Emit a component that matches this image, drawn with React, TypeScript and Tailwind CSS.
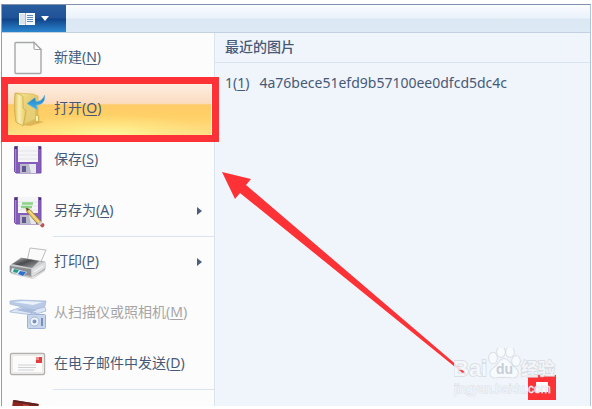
import type { ReactNode } from 'react';
import clsx from 'clsx';

function NewIcon() {
  return (
    <svg viewBox="0 0 38 36" className="h-9 w-[38px]" aria-hidden="true">
      <path d="M7 2.5h18l7 7v23a1 1 0 0 1-1 1H7a1 1 0 0 1-1-1v-29a1 1 0 0 1 1-1z" fill="#fafafa" stroke="#a5a7a8" strokeWidth="1.4" />
      <path d="M25 2.5v5.500a1.500 1.500 0 0 0 1.500 1.500H32z" fill="#fff" stroke="#a5a7a8" strokeWidth="1.200" />
    </svg>
  );
}

function OpenIcon() {
  return (
    <svg viewBox="0 0 38 36" className="h-9 w-[38px]" aria-hidden="true">
      <defs>
        <linearGradient id="flap" x1="0" y1="0" x2="1" y2="0">
          <stop offset="0" stopColor="#dfbf58" />
          <stop offset=".4" stopColor="#faeeb0" />
          <stop offset="1" stopColor="#e6c862" />
        </linearGradient>
        <linearGradient id="back" x1="0" y1="0" x2="1" y2="1">
          <stop offset="0" stopColor="#f6e591" />
          <stop offset="1" stopColor="#d8b04a" />
        </linearGradient>
        <linearGradient id="arrowBlue" x1="0" y1="0" x2="0" y2="1">
          <stop offset="0" stopColor="#2476b6" />
          <stop offset="1" stopColor="#3db7f3" />
        </linearGradient>
      </defs>
      <path d="M13 34l18-4 4 1-14 4z" fill="#a87725" opacity=".35" />
      <path d="M7 2l17 1 5 2v19l1 1v6l-17 3z" fill="url(#back)" stroke="#d4b14e" strokeWidth=".6" />
      <path d="M6 2c4 1 7 2 8 4v11l3 3-3 15-7-4C5 21 5 10 6 2z" fill="url(#flap)" stroke="#c9a646" strokeWidth=".7" />
      <path d="M18 14l8 4v10l-10 4 2-12z" fill="#e8d078" opacity=".9" />
      <path d="M27 25h2v5h-2z" fill="#fff3b0" />
      <path d="M35.500 4c1 6-2 10-8 10l1 5-10.500-6.500L26 6.500l1 4c4 0 7-2 8.500-6.500z" fill="url(#arrowBlue)" stroke="#71bde5" strokeWidth=".5" />
    </svg>
  );
}

function Floppy() {
  return (
    <>
      <path d="M5.500 4.500H32v26.500H7L5.500 29.500z" fill="#855cba" stroke="#7450a6" strokeWidth="1" />
      <path d="M6.500 7v23" stroke="#a786d2" strokeWidth="1" />
      <path d="M9 4h20v16H9z" fill="#f5f5f8" />
      <path d="M9 9h20M9 13h20M9 17h20" stroke="#dedfe6" strokeWidth=".8" />
      <path d="M11 22h16v9H11z" fill="#b9bbc8" />
      <path d="M20 22h7v9h-5z" fill="#e7e8ef" />
      <path d="M13 24h4v6h-4z" fill="#635590" />
      <path d="M6 5h2v2H6zM30 5h2v2h-2z" fill="#45336b" />
    </>
  );
}

function SaveIcon() {
  return (
    <svg viewBox="0 0 38 36" className="h-9 w-[38px]" aria-hidden="true">
      <Floppy />
    </svg>
  );
}

function SaveAsIcon() {
  return (
    <svg viewBox="0 0 38 36" className="h-9 w-[38px]" aria-hidden="true">
      <Floppy />
      <path d="M13 10.500h11M12 14h11" stroke="#8bd384" strokeWidth="2.500" />
      <path d="M17 15l4 1.500 11 12-3 3L18 19z" fill="#e8c65e" stroke="#927034" strokeWidth=".8" />
      <path d="M17 15l3 1-1.500 2z" fill="#4a4335" />
      <path d="M20 18l10 11" stroke="#fbeaa4" strokeWidth="1" />
      <path d="M29 30.500l3-2.500 3 3-3 3z" fill="#cfd6d5" />
      <path d="M31 32.500l3-2.500c2 1 2 4-1 4.500z" fill="#c84d51" />
    </svg>
  );
}

function PrintIcon() {
  return (
    <svg viewBox="0 0 38 36" className="h-9 w-[38px]" aria-hidden="true">
      <defs>
        <linearGradient id="printer" x1="0" y1="0" x2="1" y2="1">
          <stop offset="0" stopColor="#bbb" />
          <stop offset=".45" stopColor="#4a4c4e" />
          <stop offset="1" stopColor="#aaa" />
        </linearGradient>
      </defs>
      <path d="M2 28l22 6 12-10v3L24 35 2 30z" fill="#777" opacity=".3" />
      <path d="M21 4l16 2-6 14-13-3z" fill="#fafafa" stroke="#b3b5b7" strokeWidth=".9" />
      <path d="M1 22l11-8 24 4v7L23 33 1 28z" fill="#c7c9cb" stroke="#909294" strokeWidth=".7" />
      <path d="M3 20l10-6 17 3-7 7z" fill="url(#printer)" />
      <path d="M1 22l21 3v7L1 28z" fill="#8b8e91" />
      <path d="M23 25l13-7v6L23 33z" fill="#dcddde" />
      <path d="M3 24l15 4-4 4-12-4z" fill="#e1edf4" />
      <path d="M5 25l5 1-2 3-4-1z" fill="#269d83" />
      <path d="M11 27l6 1-3 4-5-2z" fill="#2e6fce" />
      <path d="M25 28l9-6" stroke="#f5f5f5" strokeWidth="1.200" />
    </svg>
  );
}

function ScannerIcon() {
  return (
    <svg viewBox="0 0 38 36" className="h-9 w-[38px]" aria-hidden="true">
      <path d="M1 6l10-1 26 1-1 5-11 4L1 9z" fill="#b9cae6" stroke="#a5b7d8" strokeWidth=".7" />
      <path d="M4 7l20 3 10-3-20-1z" fill="#e9f1fc" />
      <path d="M1 16l12-4 11 3 12-3 1 4-13 4L1 17z" fill="#dce6f6" stroke="#a5b7d8" strokeWidth=".8" />
      <path d="M7 15l7-2 14 2-7 3z" fill="#a9bbdb" />
      <rect x="18.500" y="19.500" width="18" height="14" rx="1" fill="#c8d6ed" stroke="#9fb2d5" />
      <path d="M22 19.500v-2h5v2" fill="#b4c6e3" stroke="#9fb2d5" strokeWidth=".7" />
      <circle cx="25.500" cy="26.500" r="4.500" fill="#eef4fd" stroke="#a3b5d6" />
      <circle cx="25.500" cy="26.500" r="2" fill="#7e94bf" />
      <path d="M33 23v8" stroke="#778fbc" strokeWidth="2" />
    </svg>
  );
}

function MailIcon() {
  return (
    <svg viewBox="0 0 38 36" className="h-9 w-[38px]" aria-hidden="true">
      <rect x="1.500" y="7.500" width="34" height="21" rx="1.500" fill="#fbfbfb" stroke="#b2b0ae" strokeWidth="1.400" />
      <rect x="3.500" y="9.500" width="30" height="17" fill="none" stroke="#ece9e7" />
      <path d="M27 11h6v6h-6z" fill="#e43d3f" />
      <path d="M27 11h3v3h-3z" fill="#f08683" />
      <path d="M9 19h18M9 21.500h18M9 24h16" stroke="#cfd0d2" strokeWidth="1" />
    </svg>
  );
}

type Item = {
  label: string;
  accessKey: string;
  icon: ReactNode;
  submenu?: boolean;
  disabled?: boolean;
  active?: boolean;
  divider?: boolean;
};

const items: Item[] = [
  { label: '新建', accessKey: 'N', icon: <NewIcon /> },
  { label: '打开', accessKey: 'O', icon: <OpenIcon />, active: true },
  { label: '保存', accessKey: 'S', icon: <SaveIcon /> },
  { label: '另存为', accessKey: 'A', icon: <SaveAsIcon />, submenu: true, divider: true },
  { label: '打印', accessKey: 'P', icon: <PrintIcon />, submenu: true },
  { label: '从扫描仪或照相机', accessKey: 'M', icon: <ScannerIcon />, disabled: true },
  { label: '在电子邮件中发送', accessKey: 'D', icon: <MailIcon />, divider: true },
];

function MenuItem({ label, accessKey, icon, submenu, disabled, active, divider }: Item) {
  return (
    <li className="relative">
      {active && (
        <span className="absolute inset-y-0 left-1.5 right-[3px] bg-[radial-gradient(50%_40%_at_50%_100%,#fff79e_0%,#fff08c80_50%,transparent_100%),linear-gradient(#fdeee2_0%,#fbdcbf_38%,#ffcb66_41%,#ffd168_65%,#ffe08a_100%)]" />
      )}
      <button
        type="button"
        disabled={disabled}
        className={clsx(
          'relative flex h-[51px] w-full items-center gap-[7px] pb-0.5 pl-[7px] text-left',
          disabled ? 'text-[#a5a5a5]' : 'text-[#465a78]',
        )}
      >
        {icon}
        <span className="flex-1 whitespace-nowrap pb-0.5">
          {label}(<u className="underline-offset-2">{accessKey}</u>)
        </span>
        {submenu && (
          <svg viewBox="0 0 5 8" className="mr-3 h-2 w-[5px]" aria-hidden="true">
            <path d="M0 0l5 4-5 4z" fill="#4c607d" />
          </svg>
        )}
      </button>
      {divider && <span className="absolute bottom-0 left-[51px] right-0 h-px bg-[#dae4f0]" />}
      {active && (
        <span className="pointer-events-none absolute -inset-y-[7px] -left-px -right-[5px] z-10 border-[7px] border-[#fd3236]" />
      )}
    </li>
  );
}

function Watermark() {
  return (
    <svg viewBox="0 0 108 58" className="absolute bottom-0 right-7 h-[58px] w-[108px]" aria-hidden="true">
      <path d="M74 27h28v25H74z" fill="#fd3236" />
      <path d="M82 34h12v10H82z" fill="#fff" />
      <g fill="#fafcfe" fillOpacity=".8" stroke="#cfd5dc" strokeOpacity=".8" strokeWidth="1.500" paintOrder="stroke">
        <text x="-1" y="28" fontFamily="Liberation Sans, sans-serif" fontWeight="bold" fontSize="22">Bai</text>
        <ellipse cx="39" cy="10" rx="4" ry="5.500" />
        <ellipse cx="47" cy="4" rx="4" ry="5" />
        <ellipse cx="56" cy="4" rx="4" ry="5" />
        <ellipse cx="62" cy="13" rx="4" ry="5" />
        <path d="M50 11c5 0 6 5 10 8s5 5 3 9c-2 3-7 1-13 1s-11 2-13-1c-2-4 0-6 4-9s4-8 9-8z" />
        <text x="67" y="27" fontFamily="Noto Sans CJK SC, sans-serif" fontWeight="bold" fontSize="17">经验</text>
        <text x="0" y="45" fontFamily="Liberation Sans, sans-serif" fontSize="12" strokeWidth=".8">jingyan.baidu.com</text>
      </g>
      <text x="42" y="26" fontFamily="Liberation Sans, sans-serif" fontWeight="bold" fontSize="14" fill="#c6ced7">du</text>
    </svg>
  );
}

export default function App() {
  return (
    <div className="bg-white px-px pb-1 pt-1 font-['Noto_Sans','Noto_Sans_CJK_SC',sans-serif] text-sm leading-5 text-[#465a78]">
      <div className="border-l border-r border-t border-l-[#8e9fb9] border-r-[#b5c3d7] border-t-[#8191ad]">
        <header className="flex h-7 border-b border-[#c2d0e2] bg-[linear-gradient(#fafcff_0%,#eaf2fb_48%,#dbe7f3_52%,#dde9f5_100%)]">
          <button
            type="button"
            aria-label="菜单"
            className="flex w-16 items-center justify-center gap-1.5 bg-[linear-gradient(#285d9e_0%,#1f5298_48%,#104389_52%,#2b86cf_100%)]"
          >
            <svg viewBox="0 0 16 12" className="h-3 w-4" aria-hidden="true">
              <path d="M0 0h16v12H0z" fill="#f6f9fc" />
              <path d="M1 1h5v10H1z" fill="#dce3ec" />
              <path d="M8 2.500h6M8 4.500h6M8 6.500h6M8 8.500h6" stroke="#5d88bc" strokeWidth="1" />
              <path d="M6.500 0v12" stroke="#a4bbd8" strokeWidth="1" />
            </svg>
            <svg viewBox="0 0 8 5" className="h-[5px] w-2" aria-hidden="true">
              <path d="M0 0h8L4 5z" fill="#fff" />
            </svg>
          </button>
        </header>

        <div className="flex">
          <nav className="w-[213px] shrink-0 border-r border-[#dae4ef] bg-[#fcfcfd]">
            <ul>
              {items.map((item) => (
                <MenuItem key={item.accessKey} {...item} />
              ))}
            </ul>
            {/* next entry, cut off by the window edge */}
            <div className="h-4 overflow-hidden pl-2.5 pt-2.5">
              <svg viewBox="0 0 28 8" className="h-2 w-7" aria-hidden="true">
                <path d="M1 0l26 4-1 4H0z" fill="#8d2520" />
                <path d="M2 1l24 4" stroke="#5b2420" strokeWidth="2" />
                <path d="M11 4l6 1-2 3h-4z" fill="#b94335" />
              </svg>
            </div>
          </nav>

          <main className="relative flex-1 bg-[#f0f4fb]">
            <h2 className="h-[30px] border-b border-[#d9e4ef] pl-2.5 pt-1 font-medium">最近的图片</h2>
            <a href="#recent" className="mt-2.5 flex gap-2.5 pl-2.5">
              <span>
                1(<u className="underline-offset-2">1</u>)
              </span>
              <span>4a76bece51efd9b57100ee0dfcd5dc4c</span>
            </a>
            <svg viewBox="0 0 260 210" className="pointer-events-none absolute left-1.5 top-[138px] h-[210px] w-[260px]" aria-hidden="true">
              <path d="M1 1l29 7-5 6 220 188-1 2L19 22l-5 6z" fill="#fd3236" />
            </svg>
            <Watermark />
          </main>
        </div>
      </div>
    </div>
  );
}
